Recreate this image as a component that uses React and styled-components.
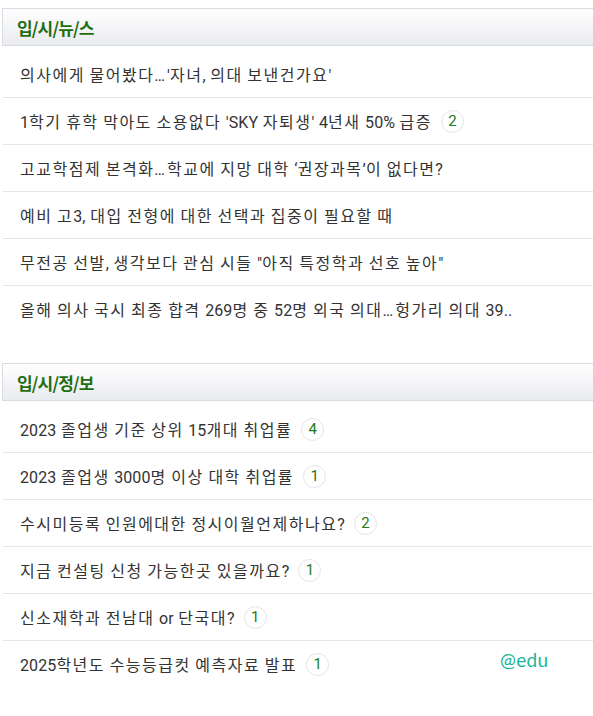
import React from "react";
import styled, { createGlobalStyle } from "styled-components";

const Global = createGlobalStyle`
  html, body { margin: 0; padding: 0; background: #fff; }
  body { font-family: Roboto, "Noto Sans CJK KR", sans-serif; color: #333; }
`;

const Page = styled.div`
  position: relative;
  width: 593px;
  height: 716px;
  overflow: hidden;
  padding: 8px 0 0 2px;
  box-sizing: border-box;
`;

const Section = styled.section`
  margin-bottom: ${(p) => p.$gap || 0}px;
`;

const Header = styled.div`
  height: 36px;
  width: 620px;
  display: flex;
  align-items: center;
  padding-left: 14px;
  box-sizing: content-box;
  border: 1px solid #d8dbe2;
  background: linear-gradient(#ffffff, #eaebef);
`;

const Title = styled.h2`
  margin: 0;
  font-family: "Noto Sans CJK KR", sans-serif;
  font-size: 17px;
  font-weight: 700;
  color: #1f6e12;
  letter-spacing: -0.8px;
`;

const List = styled.ul`
  list-style: none;
  margin: 0;
  padding: 5px 0 0 1px;
`;

const Row = styled.li`
  height: 46px;
  display: flex;
  align-items: center;
  padding-left: 17px;
  border-bottom: 1px solid ${(p) => (p.$last ? "transparent" : "#e6e6e6")};
  font-size: 16px;
  color: #333;
  letter-spacing: 0.1px;
  word-spacing: 0.5px;
  white-space: nowrap;
`;

const Text = styled.span`
  white-space: pre;
`;

const Hangul = styled.span`
  font-family: "Noto Sans CJK KR", sans-serif;
  letter-spacing: 1.5px;
`;

const Dots = styled.span`
  font-family: Roboto, sans-serif;
  letter-spacing: 2px;
`;

const Badge = styled.span`
  display: inline-flex;
  align-items: center;
  justify-content: center;
  width: 21px;
  height: 21px;
  margin-left: 9px;
  border: 1px solid #e4e4e4;
  border-radius: 50%;
  font-size: 15px;
  letter-spacing: 0;
  color: #237a14;
`;

const Watermark = styled.div`
  position: absolute;
  left: 500px;
  top: 648px;
  font-family: "Lato", "Noto Sans", sans-serif;
  font-size: 19px;
  color: #1bb59b;
  letter-spacing: 0.3px;
`;

const news = [
  { t: "의사에게 물어봤다…'자녀, 의대 보낸건가요'" },
  { t: "1학기 휴학 막아도 소용없다 'SKY 자퇴생' 4년새 50% 급증", n: 2 },
  { t: "고교학점제 본격화…학교에 지망 대학 ‘권장과목’이 없다면?" },
  { t: "예비 고3, 대입 전형에 대한 선택과 집중이 필요할 때" },
  { t: "무전공 선발, 생각보다 관심 시들 \"아직 특정학과 선호 높아\"" },
  { t: "올해 의사 국시 최종 합격 269명 중 52명 외국 의대…헝가리 의대 39.." },
];

const info = [
  { t: "2023 졸업생 기준 상위 15개대 취업률", n: 4 },
  { t: "2023 졸업생 3000명 이상 대학 취업률", n: 1 },
  { t: "수시미등록 인원에대한 정시이월언제하나요?", n: 2 },
  { t: "지금 컨설팅 신청 가능한곳 있을까요?", n: 1 },
  { t: "신소재학과 전남대 or 단국대?", n: 1 },
  { t: "2025학년도 수능등급컷 예측자료 발표", n: 1 },
];

const HANGUL = /^[\uAC00-\uD7A3]+$/;

function Headline({ text }) {
  const parts = text.split(/([\uAC00-\uD7A3]+|…)/).filter(Boolean);
  return (
    <Text>
      {parts.map((p, i) => {
        if (HANGUL.test(p)) return <Hangul key={i}>{p}</Hangul>;
        if (p === "…") return <Dots key={i}>{p}</Dots>;
        return p;
      })}
    </Text>
  );
}

function Board({ title, items, gap }) {
  return (
    <Section $gap={gap}>
      <Header>
        <Title>{title}</Title>
      </Header>
      <List>
        {items.map((it, i) => (
          <Row key={i} $last={i === items.length - 1}>
            <Headline text={it.t} />
            {it.n != null && <Badge>{it.n}</Badge>}
          </Row>
        ))}
      </List>
    </Section>
  );
}

export default function App() {
  return (
    <>
      <Global />
      <Page>
        <Board title="입/시/뉴/스" items={news} gap={30} />
        <Board title="입/시/정/보" items={info} />
        <Watermark>@edu</Watermark>
      </Page>
    </>
  );
}
